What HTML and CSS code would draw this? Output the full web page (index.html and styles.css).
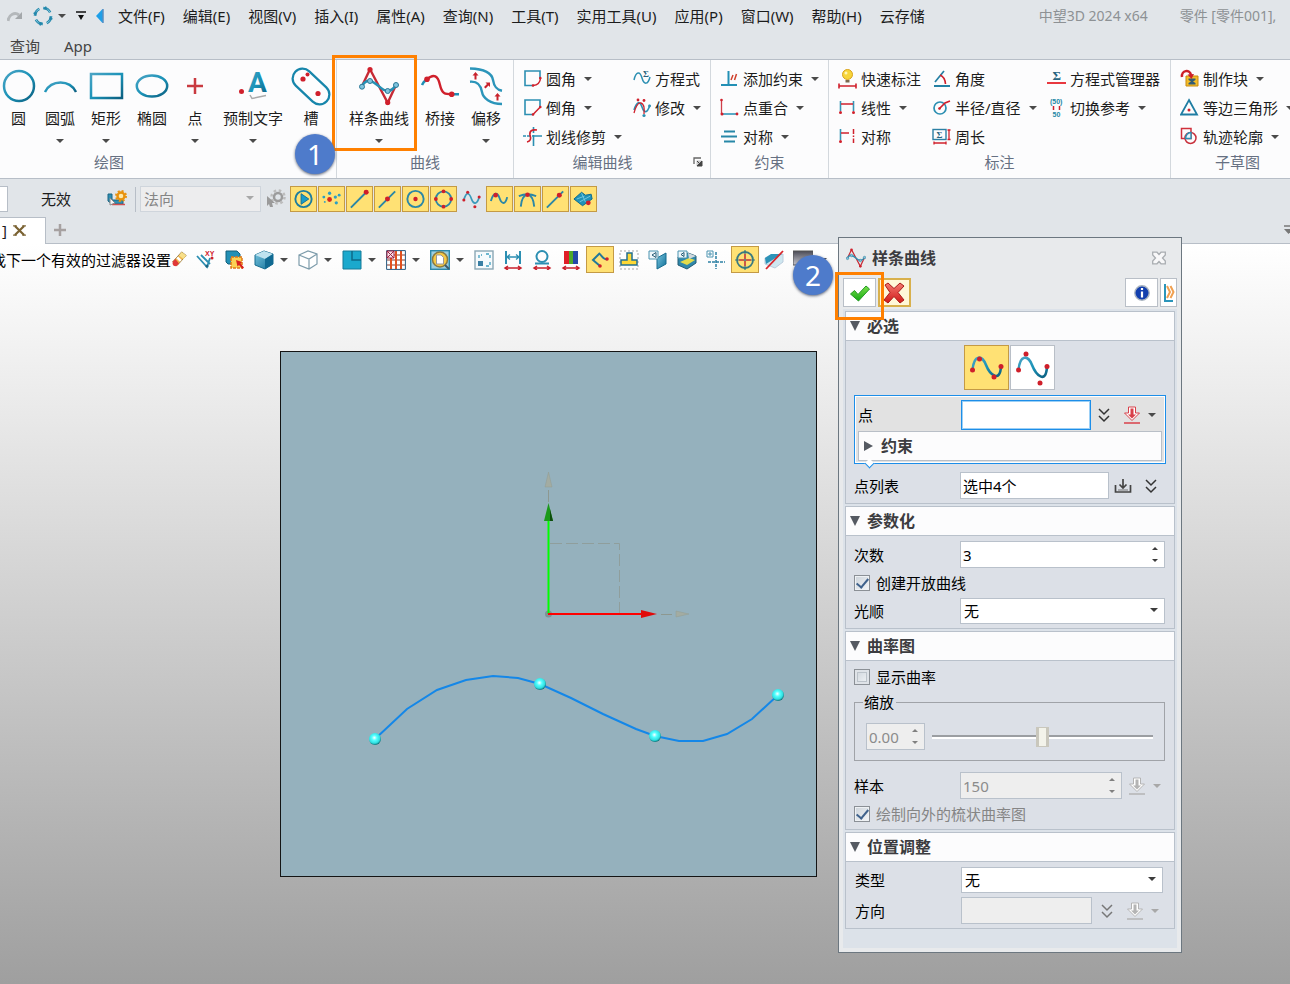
FILE: index.html
```html
<!DOCTYPE html>
<html lang="zh-CN">
<head>
<meta charset="utf-8">
<title>中望3D 2024 x64</title>
<link rel="stylesheet" href="styles.css">
</head>
<body>
<svg class="defs" width="0" height="0" aria-hidden="true">
  <defs>
    <linearGradient id="teal" x1="0" y1="0" x2="1" y2="1"><stop offset="0" stop-color="#4aa3c4"/><stop offset=".5" stop-color="#1b93b8"/><stop offset="1" stop-color="#0c5f80"/></linearGradient>
    <linearGradient id="cube" x1="0" y1="0" x2="1" y2="1"><stop offset="0" stop-color="#7cc7e0"/><stop offset="1" stop-color="#0f6f98"/></linearGradient>
    <radialGradient id="ball" cx=".45" cy=".4" r=".6"><stop offset="0" stop-color="#ffffff"/><stop offset=".35" stop-color="#5ff"/><stop offset=".75" stop-color="#2fdfe0"/><stop offset="1" stop-color="#0b6f75"/></radialGradient>
    <linearGradient id="ok" x1="0" y1="0" x2="0" y2="1"><stop offset="0" stop-color="#7be04a"/><stop offset="1" stop-color="#12a812"/></linearGradient>
    <linearGradient id="no" x1="0" y1="0" x2="0" y2="1"><stop offset="0" stop-color="#f47a70"/><stop offset="1" stop-color="#d01818"/></linearGradient>
    <linearGradient id="screen" x1="0" y1="0" x2="0" y2="1"><stop offset="0" stop-color="#4a4a55"/><stop offset="1" stop-color="#c8c8d0"/></linearGradient>
  </defs>
  <symbol id="spline" viewBox="0 0 40 40"><path d="M11 3.300L28.700 36.700L37 19M2.700 20.700L11 3.300" fill="none" stroke="#c62a35" stroke-width="2.400"/><path d="M2.700 20.700Q6 14 11 15C18 16 22 25 28.700 25Q33 25 37 19" fill="none" stroke="#2590b4" stroke-width="2.600"/><g fill="#d0202c"><circle cx="11" cy="3.500" r="2.600"/><circle cx="28.700" cy="36.500" r="2.600"/></g><g fill="#7fc4de" stroke="#2a7795"><circle cx="3" cy="20.700" r="2.500"/><circle cx="11" cy="15" r="2.500"/><circle cx="28.700" cy="25" r="2.500"/><circle cx="37" cy="19" r="2.500"/></g></symbol>
  <symbol id="chevrons" viewBox="0 0 14 16"><path d="M2 2L7 7L12 2M2 9L7 14L12 9" fill="none" stroke="currentColor" stroke-width="1.500"/></symbol>
  <symbol id="pick" viewBox="0 0 18 20"><path d="M5.500 2H12.500V8H16.500L9 15.500L1.500 8H5.500Z" fill="#fff" stroke="currentColor"/><path d="M7.500 3.500H10.500V9.500H13L9 13.500L5 9.500H7.500Z" fill="currentColor"/><path d="M1 18H17" stroke="currentColor" stroke-width="1.500"/></symbol>
</svg>

<div class="app">
  <header class="menubar">
    <div class="quick">
      <svg class="q-redo" viewBox="0 0 16 14"><path d="M1 12C2 5 8 3 12 6" fill="none" stroke="#b4b8bb" stroke-width="3"/><path d="M15 3V10H8Z" fill="#a4a8ab"/></svg>
      <svg class="q-sync" viewBox="0 0 20 20"><circle cx="10" cy="10" r="8" fill="none" stroke="#2387ab" stroke-width="2.600" stroke-dasharray="8.560 4"/><circle cx="10" cy="10" r="8" fill="none" stroke="#9fd8ea" stroke-width=".8" stroke-dasharray="8.560 4"/><path d="M17 10L20 13L16 14.500ZM10 17L7 20L5.500 16ZM3 10L0 7L4 5.500ZM10 3L13 0L14.500 4Z" fill="#2387ab"/></svg>
      <i class="caret"></i>
      <svg class="q-bar" viewBox="0 0 10 10"><path d="M0 1H10" stroke="#111" stroke-width="1.500"/><path d="M2 4H8L5 9Z" fill="#111"/></svg>
      <svg class="q-left" viewBox="0 0 8 14"><path d="M0 7L6.500 0V14Z" fill="#1e9fe8"/><path d="M7 0V14" stroke="#1565b0"/></svg>
    </div>
    <nav class="menus">
      <a href="#">文件(F)</a><a href="#">编辑(E)</a><a href="#">视图(V)</a><a href="#">插入(I)</a><a href="#">属性(A)</a><a href="#">查询(N)</a><a href="#">工具(T)</a><a href="#">实用工具(U)</a><a href="#">应用(P)</a><a href="#">窗口(W)</a><a href="#">帮助(H)</a><a href="#">云存储</a>
    </nav>
    <div class="doc-title"><span>中望3D 2024 x64</span><span>零件 [零件001],</span></div>
  </header>
  <nav class="ribbon-tabs"><a href="#">查询</a><a href="#">App</a></nav>

  <section class="ribbon">
    <div class="group group-draw">
      <div class="big-row">
        <button class="big w-s"><svg viewBox="0 0 40 40"><circle cx="20" cy="20" r="15" fill="none" stroke="url(#teal)" stroke-width="2.500"/></svg><span>圆</span></button>
        <button class="big"><svg viewBox="0 0 40 40"><path d="M5 26A17.500 17.500 0 0 1 36 26" fill="none" stroke="url(#teal)" stroke-width="2.500"/></svg><span>圆弧</span><i class="caret"></i></button>
        <button class="big"><svg viewBox="0 0 40 40"><rect x="5" y="8" width="31" height="24" fill="none" stroke="url(#teal)" stroke-width="2.500"/></svg><span>矩形</span><i class="caret"></i></button>
        <button class="big"><svg viewBox="0 0 40 40"><ellipse cx="20" cy="20" rx="15.200" ry="10.500" fill="none" stroke="url(#teal)" stroke-width="2.500"/></svg><span>椭圆</span></button>
        <button class="big w-m"><svg viewBox="0 0 40 40"><path d="M12 20H28M20 12V28" stroke="#c93a40" stroke-width="2.500"/></svg><span>点</span><i class="caret"></i></button>
        <button class="big w-l"><svg viewBox="0 0 40 40"><circle cx="8.500" cy="25.500" r="2.500" fill="#d0202c"/><text x="15" y="26" class="glyph-a">A</text><path d="M17 29L19 32.500L33 29.500" fill="none" stroke="#aaa" stroke-width="1.500"/></svg><span>预制文字</span><i class="caret"></i></button>
        <button class="big w-m"><svg viewBox="0 0 40 40"><path d="M11.500 12.500L28.500 28.500" stroke="#1786ab" stroke-width="22" stroke-linecap="round"/><path d="M11.500 12.500L28.500 28.500" stroke="#fdfdfe" stroke-width="17.500" stroke-linecap="round"/><g fill="#d0202c"><circle cx="12" cy="13" r="2.600"/><circle cx="16.500" cy="8.500" r="2"/><circle cx="27" cy="27.500" r="2.600"/></g></svg><span>槽</span></button>
      </div>
      <div class="group-name">绘图</div>
    </div>
    <div class="group group-curve">
      <div class="big-row">
        <button class="big w-l"><svg><use href="#spline"/></svg><span>样条曲线</span><i class="caret"></i></button>
        <button class="big"><svg viewBox="0 0 40 40"><path d="M2 19Q4 15 7 13.300M31 28.300H39" fill="none" stroke="#1f8fb5" stroke-width="2.600"/><path d="M7 13.300C14 7 18 10 20 19S25 28.300 32 28.300" fill="none" stroke="#d0202c" stroke-width="2.400"/><circle cx="7" cy="13.300" r="2.800" fill="#d0202c"/><circle cx="31.700" cy="28.300" r="2.800" fill="#d0202c"/></svg><span>桥接</span></button>
        <button class="big"><svg viewBox="0 0 40 40"><path d="M4 2.500C20 3 26 8 27 14S30 23.500 36 24.700M4 15.700C12 15 15 20 16 26S24 38 36 38" fill="none" stroke="#2b95ba" stroke-width="2.400"/><g fill="#c8222d"><path d="M9.500 6L12.500 9.500H10.500V13.500H8.500V9.500H6.500Z"/><path d="M31.500 27L34.500 30.500H32.500V34.500H30.500V30.500H28.500Z"/><path d="M24 16.500V21L22.500 19.500L19.500 22.500L18 21L21 18L19.500 16.500Z"/></g></svg><span>偏移</span><i class="caret"></i></button>
      </div>
      <div class="group-name">曲线</div>
    </div>
    <div class="group group-edit">
      <div class="cols">
        <div class="col col-a">
          <button class="small"><svg viewBox="0 0 20 20"><path d="M17 10V2H2V16.500H10" fill="none" stroke="#2c8fb2" stroke-width="1.600"/><path d="M10 16.500Q17 16 17.500 9" fill="none" stroke="#d0202c" stroke-width="1.500"/><circle cx="10" cy="16.500" r="1.300" fill="#d0202c"/><circle cx="17.300" cy="9" r="1.300" fill="#d0202c"/></svg>圆角<i class="caret"></i></button>
          <button class="small"><svg viewBox="0 0 20 20"><path d="M17 10V2H2V16.500H10" fill="none" stroke="#2c8fb2" stroke-width="1.600"/><path d="M10 16.500L17.300 9" stroke="#d0202c" stroke-width="1.500"/><circle cx="10" cy="16.500" r="1.300" fill="#d0202c"/><circle cx="17.300" cy="9" r="1.300" fill="#d0202c"/></svg>倒角<i class="caret"></i></button>
          <button class="small"><svg viewBox="0 0 20 20"><path d="M0 9H8" stroke="#2c8fb2" stroke-width="1.500" stroke-dasharray="3 1"/><path d="M9 9H19M10.500 8V19M10.500 0V6" stroke="#2c8fb2" stroke-width="1.600"/><path d="M14 3Q6 2 7 8Q9 14 4 15" fill="none" stroke="#d0202c" stroke-width="1.700"/></svg>划线修剪<i class="caret"></i></button>
        </div>
        <div class="col">
          <button class="small"><svg viewBox="0 0 20 20"><path d="M2 11C4 2 8 2 10 9S16 16 18 8" fill="none" stroke="#2c8fb2" stroke-width="1.500"/><text x="11" y="8" class="glyph-s">Σ</text></svg>方程式</button>
          <button class="small"><svg viewBox="0 0 20 20"><path d="M2 12C5 3 8 3 10 9S15 16 18 7" fill="none" stroke="#2c8fb2" stroke-width="1.600"/><path d="M2 15Q5 4 9 5T12 16" fill="none" stroke="#d0202c" stroke-width="1.300"/><g fill="#d0202c"><circle cx="6" cy="2" r="1.400"/><circle cx="12" cy="2.500" r="1.400"/></g><g fill="#2c8fb2"><circle cx="12" cy="17.500" r="1.600"/><circle cx="17.500" cy="8" r="1.400"/></g></svg>修改<i class="caret"></i></button>
        </div>
      </div>
      <div class="group-name">编辑曲线<button class="launcher" aria-label="编辑曲线选项"><svg viewBox="0 0 10 10"><path d="M1 7V1H8" fill="none" stroke="#666" stroke-width="1.300"/><path d="M3.500 3.500H9V9H3.500Z" fill="#c8c8c8"/><path d="M9 4V9H4ZM4 4L7 7" fill="#444" stroke="#444"/></svg></button></div>
    </div>
    <div class="group group-con">
      <div class="cols">
        <div class="col">
          <button class="small"><svg viewBox="0 0 20 20"><path d="M1 16H17M8.500 2V16" stroke="#2390b5" stroke-width="2"/><path d="M11 11L13 6M14.500 11L16.500 5" stroke="#d0402c" stroke-width="1.500"/></svg>添加约束<i class="caret"></i></button>
          <button class="small"><svg viewBox="0 0 20 20"><path d="M1.500 2V16" stroke="#d0404a" stroke-width="1.300"/><path d="M2 16H17" stroke="#2390b5" stroke-width="1.500"/><g fill="#d0202c"><circle cx="1.500" cy="2" r="1.300"/><circle cx="2" cy="16" r="1.500"/><circle cx="17" cy="16" r="1.400"/></g></svg>点重合<i class="caret"></i></button>
          <button class="small"><svg viewBox="0 0 20 20"><path d="M4 4.500H15M1 9.500H17M4 14.500H15" stroke="#2787a8" stroke-width="2"/></svg>对称<i class="caret"></i></button>
        </div>
      </div>
      <div class="group-name">约束</div>
    </div>
    <div class="group group-dim">
      <div class="cols">
        <div class="col col-b">
          <button class="small"><svg viewBox="0 0 20 20"><circle cx="9.500" cy="5.500" r="5" fill="#f7d53a" stroke="#d9a21c"/><circle cx="8" cy="4" r="1.500" fill="#fff6b8"/><path d="M7.500 11H11.500V13.500H7.500Z" fill="#7a6a50"/><path d="M1 17H18M1 14.500V19.500M18 14.500V19.500" stroke="#d0202c" stroke-width="1.600"/></svg>快速标注</button>
          <button class="small"><svg viewBox="0 0 20 20"><path d="M2.500 3V13M15.500 3V13" stroke="#3794b5" stroke-width="1.600"/><path d="M3 6H15" stroke="#d0202c" stroke-width="1.500"/><circle cx="2.500" cy="14.500" r="1.500" fill="#d0202c"/><circle cx="15.500" cy="14.500" r="1.500" fill="#d0202c"/></svg>线性<i class="caret"></i></button>
          <button class="small"><svg viewBox="0 0 20 20"><path d="M2.500 2V13" stroke="#3794b5" stroke-width="1.600"/><path d="M3 6H11M15.500 2V7M15.500 8.500V10M15.500 11.500V16" stroke="#d0202c" stroke-width="1.500"/><circle cx="2.500" cy="14.500" r="1.500" fill="#d0202c"/></svg>对称</button>
        </div>
        <div class="col col-c">
          <button class="small"><svg viewBox="0 0 20 20"><path d="M2 17H18" stroke="#2480a4" stroke-width="2"/><path d="M3 13L12 2" stroke="#2480a4" stroke-width="1.700"/><path d="M8 6Q13 8 13.500 15" fill="none" stroke="#d0202c" stroke-width="1.600"/></svg>角度</button>
          <button class="small"><svg viewBox="0 0 20 20"><circle cx="8" cy="10" r="6" fill="none" stroke="#2c8fb2" stroke-width="1.700"/><path d="M7 11L13 5L18 3" fill="none" stroke="#d0202c" stroke-width="1.600"/><circle cx="7.500" cy="10.500" r="1.300" fill="#d0202c"/></svg>半径/直径<i class="caret"></i></button>
          <button class="small"><svg viewBox="0 0 20 20"><rect x="1" y="2.500" width="13" height="10" fill="none" stroke="#2c80a4" stroke-width="1.400"/><text x="4.500" y="11" class="glyph-s">Σ</text><path d="M2 16H14M17 3V12.500M15.500 3H18.500M15.500 12.500H18.500M2 14.500V17.500M14 14.500V17.500" stroke="#d0202c" stroke-width="1.300"/></svg>周长</button>
        </div>
        <div class="col">
          <button class="small"><svg viewBox="0 0 20 20"><text x="5.500" y="11" class="glyph-m">Σ</text><path d="M0 14H19" stroke="#e8383f" stroke-width="2"/></svg>方程式管理器</button>
          <button class="small"><svg viewBox="0 0 20 20"><text x="3" y="6" class="glyph-n">(50)</text><text x="5.500" y="19" class="glyph-n">50</text><path d="M6.500 8V12M12.500 8V12" stroke="#d0202c" stroke-width="1.500"/></svg>切换参考<i class="caret"></i></button>
        </div>
      </div>
      <div class="group-name">标注</div>
    </div>
    <div class="group group-sub">
      <div class="cols">
        <div class="col">
          <button class="small"><svg viewBox="0 0 20 20"><path d="M6 7H18V17H6Z" fill="#f4bd28" stroke="#c98a10"/><path d="M8.500 9.500H15.500V11L13 12.500L15.500 14V15.500H8.500V14L11 12.500L8.500 11Z" fill="#345c74"/><path d="M2 8C1 1 10 0 11 6" fill="none" stroke="#cc1f28" stroke-width="2.500"/><path d="M7.500 5.500L14 5L11.500 10Z" fill="#cc1f28"/></svg>制作块<i class="caret"></i></button>
          <button class="small"><svg viewBox="0 0 20 20"><path d="M9 2L17 16.500H1Z" fill="none" stroke="#1f7da3" stroke-width="1.800"/><circle cx="9" cy="12" r="1.500" fill="#d0202c"/></svg>等边三角形<i class="caret"></i></button>
          <button class="small"><svg viewBox="0 0 20 20"><rect x="1.500" y="1.500" width="9.500" height="10" fill="none" stroke="#d0303c" stroke-width="1.500"/><circle cx="10.500" cy="11" r="5.500" fill="none" stroke="#c8303c" stroke-width="1.500"/><path d="M5.500 11.500Q6 6 11 5.500V11.500Z" fill="#e9f5fa" stroke="#2c8fb2" stroke-width="1.400"/></svg>轨迹轮廓<i class="caret"></i></button>
        </div>
      </div>
      <div class="group-name">子草图</div>
    </div>
  </section>

  <div class="toolbar">
    <span class="stub"></span>
    <span class="state">无效</span>
    <svg class="tool-gear" viewBox="0 0 20 20"><path d="M1 5H5V11H16V15H5L1 12Z" fill="#2d8fb4" stroke="#1b6482"/><circle cx="14" cy="7" r="3.500" fill="#ffe9a8" stroke="#e8920e" stroke-width="2.400"/><circle cx="14" cy="7" r="5" fill="none" stroke="#e8920e" stroke-width="2" stroke-dasharray="2 1.930"/><path d="M5 15.500H18" stroke="#d05050" stroke-width="1.500"/><path d="M3 9L8 14L3 16Z" fill="#f4f4f4" stroke="#888"/></svg>
    <span class="rule"></span>
    <span class="pick-wrap pick-normal"><select aria-label="方向" disabled><option>法向</option></select></span>
    <svg class="tool-gear2" viewBox="0 0 20 20"><circle cx="12" cy="8" r="4" fill="none" stroke="#9c9c9c" stroke-width="2.500"/><circle cx="12" cy="8" r="6.500" fill="none" stroke="#bcbcbc" stroke-width="2.500" stroke-dasharray="2.500 2.600"/><path d="M1 7L9 14H6L7 18H4L3 15L1 17Z" fill="#9a9a9a"/></svg>
    <div class="snaps">
      <button class="snap on" aria-label="播放"><svg viewBox="0 0 24 24"><circle cx="12" cy="12" r="8.500" fill="none" stroke="#1d7d9f" stroke-width="2"/><path d="M9.500 6.500L17.500 12L9.500 17.500Z" fill="#1a9cc8" stroke="#0f6f95"/></svg></button>
      <button class="snap on" aria-label="点"><svg viewBox="0 0 24 24"><g fill="#2c9fc4"><circle cx="4" cy="10" r="1.500"/><circle cx="10" cy="6" r="1.700"/><circle cx="16" cy="10" r="1.700"/><circle cx="20" cy="8" r="1.500"/><circle cx="17" cy="16" r="1.700"/><circle cx="5" cy="15" r="1"/></g><circle cx="10" cy="12.500" r="2.500" fill="#d8281e"/></svg></button>
      <button class="snap on" aria-label="端点"><svg viewBox="0 0 24 24"><path d="M3 21L19 5" stroke="#2b87a6" stroke-width="2"/><circle cx="19" cy="5" r="2.600" fill="#cf1f2a"/></svg></button>
      <button class="snap on" aria-label="中点"><svg viewBox="0 0 24 24"><path d="M3 21L20 4" stroke="#2b87a6" stroke-width="2"/><circle cx="12" cy="12" r="2.600" fill="#cf1f2a"/></svg></button>
      <button class="snap on" aria-label="圆心"><svg viewBox="0 0 24 24"><circle cx="12" cy="12" r="8.500" fill="none" stroke="#2b87a6" stroke-width="2"/><circle cx="12" cy="12" r="2.300" fill="#cf1f2a"/></svg></button>
      <button class="snap on" aria-label="象限点"><svg viewBox="0 0 24 24"><circle cx="12" cy="12" r="8" fill="none" stroke="#2b87a6" stroke-width="2"/><g fill="#cf1f2a"><circle cx="12" cy="4" r="2"/><circle cx="12" cy="20" r="2"/><circle cx="4" cy="12" r="2"/><circle cx="20" cy="12" r="2"/></g></svg></button>
      <button class="snap" aria-label="控制点"><svg viewBox="0 0 24 24"><path d="M4 13C7 3 10 6 12 12S18 18 20 10" fill="none" stroke="#3a9aba" stroke-width="1.800"/><g fill="#cf1f2a"><circle cx="4" cy="13" r="1.600"/><circle cx="8" cy="5" r="1.600"/><circle cx="15.500" cy="20" r="1.600"/><circle cx="20" cy="10" r="1.600"/></g></svg></button>
      <button class="snap on" aria-label="曲线点"><svg viewBox="0 0 24 24"><path d="M3 14C6 4 10 5 12 11S18 19 20 10" fill="none" stroke="#2b87a6" stroke-width="2"/><circle cx="8" cy="8" r="2.400" fill="#cf1f2a"/></svg></button>
      <button class="snap on" aria-label="相切"><svg viewBox="0 0 24 24"><path d="M3 9Q12 5 21 9M5 20Q6 8 12 7.500Q18 8 19 20" fill="none" stroke="#2b87a6" stroke-width="2"/><circle cx="12" cy="7.500" r="2.400" fill="#cf1f2a"/></svg></button>
      <button class="snap on" aria-label="最近点"><svg viewBox="0 0 24 24"><path d="M3 21L20 4" stroke="#2b87a6" stroke-width="2"/><circle cx="16" cy="8" r="2.600" fill="#cf1f2a"/></svg></button>
      <button class="snap on" aria-label="曲面点"><svg viewBox="0 0 24 24"><path d="M2 12L10 5L14 8L20 7L21 12L11 19Z" fill="#1f92b8" stroke="#0e6a8c"/><path d="M5 12L13 9M8 15L19 9M10 6L14 15" stroke="#72c8e0"/><circle cx="17" cy="16" r="2.500" fill="#cf1f2a"/></svg></button>
    </div>
  </div>

  <div class="doc-tabs">
    <div class="doc-tab">]<button class="tab-close" aria-label="关闭"><svg viewBox="0 0 14 12"><path d="M2 1L12 11M12 1L2 11" stroke="#7a6232" stroke-width="2.400"/><path d="M0 1H4M10 1H14M0 11H4M10 11H14" stroke="#7a6232" stroke-width="1.500"/></svg></button></div>
    <button class="tab-add" aria-label="新建"><svg viewBox="0 0 14 14"><path d="M7 1V13M1 7H13" stroke="#a6a1a1" stroke-width="2.500"/></svg></button>
    <svg class="tab-more" viewBox="0 0 10 10"><path d="M1 1H10" stroke="#777" stroke-width="1.500"/><path d="M1 4H10L5.500 9Z" fill="#777"/></svg>
  </div>

  <main class="viewport">
    <svg class="canvas" aria-label="草图">
      <g transform="translate(0 -244)">
        <rect x="280.500" y="351.500" width="536" height="525" fill="#95b1bd" stroke="#141414"/>
        <path d="M550 543.500H619.500V614" fill="none" stroke="#8f9e9c" stroke-dasharray="12 4"/>
        <path d="M548.500 490V502M661 614.500H672" stroke="#8d9890"/>
        <path d="M548.500 472L552 487H545ZM689 614L676 611V617Z" fill="#a3aca2" stroke="#929c92" stroke-width=".5"/>
        <circle cx="548.500" cy="614" r="3.500" fill="#7f9096"/>
        <path d="M548.500 614V520" stroke="#0f0" stroke-width="2"/>
        <path d="M548 614H643" stroke="#f00" stroke-width="2"/>
        <path d="M548.500 503L553 521H544Z" fill="#1a9a1a"/>
        <path d="M550 509L553 521H550Z" fill="#0c4d0c"/>
        <path d="M657 614L641 610V618Z" fill="#e00a0a"/>
        <polyline points="375,739 407,709 437,690 466,680 493,676 518,678 540,684 571,698 603,714 636,729 655,736 679,741 703,741 727,734 752,719 778,695" fill="none" stroke="#1487e8" stroke-width="2"/>
        <g fill="url(#ball)"><circle cx="375" cy="739" r="6"/><circle cx="540" cy="684" r="6"/><circle cx="655" cy="736" r="6"/><circle cx="778" cy="695" r="6"/></g>
      </g>
    </svg>
    <div class="view-bar">
      <span class="hint">找下一个有效的过滤器设置</span>
      <button class="vb vb-eraser" aria-label="擦除"><svg viewBox="0 0 20 20"><path d="M3 12L13 1L18 5L8 16Z" fill="#f0b64c" stroke="#9a7a40"/><path d="M13 1L18 5L15 9L10 5Z" fill="#f8e08a"/><path d="M7 8L9 6L13 10L11 12Z" fill="#fff"/><path d="M3 12L6 9L10 14L7 17Q2 17 3 12Z" fill="#e03838"/></svg></button>
      <button class="vb" aria-label="XY"><svg viewBox="0 0 20 20"><path d="M1 6L11 17L14 8M5 5L14 14" fill="none" stroke="#2c8fb2" stroke-width="1.800"/><text x="9" y="6" class="glyph-xy">XY</text><circle cx="11" cy="16" r="1.600" fill="#1b6482"/><circle cx="16" cy="8" r="1.500" fill="#d0202c"/></svg></button>
      <button class="vb" aria-label="选择"><svg viewBox="0 0 20 20"><path d="M1 1H12L15 4V14H3L1 12Z" fill="#2390b5" stroke="#14607c"/><rect x="6" y="7" width="11" height="11" fill="#fbd155" stroke="#e07818" stroke-width="1.500" stroke-dasharray="3 1"/><path d="M11 10L17 12L15.500 13.500L19 17.500L17.500 19L14 15L12.500 16.500Z" fill="#d8201e"/></svg></button>
      <button class="vb drop" aria-label="着色"><svg viewBox="0 0 20 20"><path d="M1 5L10 1L19 4V14L11 19L1 15Z" fill="url(#cube)" stroke="#176d90"/><path d="M1 5L11 9L19 4L10 1Z" fill="#bfe3ef"/><path d="M11 9V19L19 14V4Z" fill="#116a92"/></svg><i class="caret"></i></button>
      <button class="vb drop" aria-label="线框"><svg viewBox="0 0 20 20"><path d="M1 5L10 1L19 4V14L11 19L1 15ZM1 5L11 9L19 4M11 9V19" fill="#fff" stroke="#7d9cab" stroke-width="1.200"/></svg><i class="caret"></i></button>
      <button class="vb drop" aria-label="视图"><svg viewBox="0 0 20 20"><path d="M1 1H19V19H1Z" fill="#1ba9cd" stroke="#157a98"/><path d="M10 1V10H19" fill="none" stroke="#0e6a88" stroke-width="1.500"/></svg><i class="caret"></i></button>
      <button class="vb drop" aria-label="栅格"><svg viewBox="0 0 20 20"><path d="M0 0H20V20H0Z" fill="#fff"/><path d="M1 5H20M1 10H20M1 15H20" stroke="#8a3a2a" stroke-width="1.200" stroke-dasharray="3 2"/><path d="M5 5V19M10 1V19M15 1V19" stroke="#e2511f" stroke-width="2"/><path d="M.6.6H19.400V19.400H.6Z" fill="none" stroke="#285a80"/><path d="M1 1H8V8H1ZM1 1L8 8M8 1L1 8" fill="#f4dfe8" stroke="#a02040"/></svg><i class="caret"></i></button>
      <button class="vb drop" aria-label="缩放"><svg viewBox="0 0 20 20"><rect x=".7" y=".7" width="18.600" height="18.600" fill="#9bcfe2" stroke="#2c87a8" stroke-width="1.400"/><circle cx="10" cy="9.500" r="7.500" fill="#f6c945" stroke="#8a7a40" stroke-width="1.500"/><path d="M6.500 5H11L13.500 7.500V14H6.500Z" fill="#fff" stroke="#999"/><path d="M15 15L19 19" stroke="#405a68" stroke-width="2"/></svg><i class="caret"></i></button>
      <button class="vb" aria-label="适应"><svg viewBox="0 0 20 20"><rect x="1" y="1" width="18" height="18" fill="#f6fafc" stroke="#8ba7b5" stroke-width="1.400"/><path d="M5 8V5H8M12 4H16V8M16 12V16H12" fill="none" stroke="#3fa0c0" stroke-width="1.300" stroke-dasharray="3 2"/><path d="M4 11H9V16H4Z" fill="#3a7fa4"/></svg></button>
      <button class="vb" aria-label="线性标注"><svg viewBox="0 0 20 20"><path d="M3 1V14M17 1V14" stroke="#2c8fb2" stroke-width="2"/><path d="M4 7H16M7 4.500L4 7L7 9.500M13 4.500L16 7L13 9.500" fill="none" stroke="#2c8fb2" stroke-width="1.300"/><path d="M3 18H17M5 16L2 18L5 20M15 16L18 18L15 20" fill="none" stroke="#c8202c" stroke-width="1.500"/></svg></button>
      <button class="vb" aria-label="圆标注"><svg viewBox="0 0 20 20"><circle cx="10" cy="6.500" r="5.500" fill="none" stroke="#2c8fb2" stroke-width="2"/><path d="M3 13.500H17" stroke="#2c8fb2" stroke-width="2"/><path d="M3 18H17M5 16L2 18L5 20M15 16L18 18L15 20" fill="none" stroke="#c8202c" stroke-width="1.500"/></svg></button>
      <button class="vb" aria-label="颜色"><svg viewBox="0 0 20 20"><path d="M3 1H8V14H3Z" fill="#e01f28"/><path d="M8 1H12V14H8Z" fill="#4ea82c"/><path d="M12 1H17V14H12Z" fill="#2448a8"/><path d="M3 18H17M5 16L2 18L5 20M15 16L18 18L15 20" fill="none" stroke="#c8202c" stroke-width="1.500"/></svg></button>
      <button class="vb on" aria-label="折线"><svg viewBox="0 0 20 20"><path d="M10 3L3 10L10 16M10 4Q14 10 17 9" fill="none" stroke="#23789a" stroke-width="2"/><circle cx="17" cy="9" r="1.800" fill="#d0202c"/><circle cx="10" cy="16" r="1.800" fill="#d0202c"/></svg></button>
      <button class="vb" aria-label="投影"><svg viewBox="0 0 20 20"><rect x="1" y="1" width="18" height="18" fill="none" stroke="#a5a5a5" stroke-dasharray="2 2"/><path d="M8 3H13V10H18V15H2V10H8Z" fill="#fdd835" stroke="#236f90" stroke-width="1.500"/></svg></button>
      <button class="vb" aria-label="剖面"><svg viewBox="0 0 20 20"><path d="M9 8L18 3V14L9 19Z" fill="url(#cube)" stroke="#176d90"/><path d="M1 1H10V9H1Z" fill="#eef6fa" stroke="#4b93b0"/><path d="M8 2.500L4 5L8 7.500Z" fill="none" stroke="#235a74"/></svg></button>
      <button class="vb" aria-label="剖切"><svg viewBox="0 0 20 20"><path d="M1 7L11 3L19 6V13L10 19L1 15Z" fill="#2f88ab" stroke="#255c74"/><path d="M3 12L12 8L18 10L10 15Z" fill="#e3dc4a"/><path d="M11 3L19 6L12 9Z" fill="#cfd8dc"/><path d="M1 1H10V8H1Z" fill="#eef6fa" stroke="#4b93b0"/><path d="M7 2.500L4 4.500L7 6.500Z" fill="none" stroke="#235a74"/></svg></button>
      <button class="vb" aria-label="坐标"><svg viewBox="0 0 20 20"><path d="M10 2V19M2 12H19" stroke="#2c80a4" stroke-width="1.500" stroke-dasharray="3 1"/><path d="M1 1H7V7H1ZM3 3H5V5H3Z" fill="#fff" stroke="#4b93b0"/></svg></button>
      <button class="vb on" aria-label="目标"><svg viewBox="0 0 20 20"><circle cx="10" cy="10" r="8" fill="none" stroke="#3a7a80" stroke-width="1.800"/><path d="M10 0V20M0 10H20" stroke="#3a7a80" stroke-width="1.200"/><path d="M10 4V9M10 11V16M4 10H9M11 10H16" stroke="#e0453a" stroke-width="1.600"/></svg></button>
      <button class="vb" aria-label="隐藏面"><svg viewBox="0 0 20 20"><path d="M1 8L7 5L19 4V12L11 18L1 14Z" fill="#cfe7f0" stroke="#bcd"/><path d="M1 8L7 4L18 4L2 14Z" fill="#2d93b8"/><path d="M2 19L19 1" stroke="#d8262c" stroke-width="1.800"/></svg></button>
      <button class="vb drop" aria-label="显示"><svg viewBox="0 0 20 20"><rect x="0" y="1" width="20" height="14" fill="url(#screen)" stroke="#555"/></svg><i class="caret"></i></button>
    </div>
  </main>

  <form class="dialog" aria-label="样条曲线">
    <div class="dialog-title"><svg><use href="#spline"/></svg><h1>样条曲线</h1><button type="button" class="dialog-close" aria-label="关闭"><svg viewBox="0 0 14 14"><path d="M.7 1.200H5L7 3.500L9 1.200H13.300V4L10.500 7L13.300 10V12.800H9L7 10.500L5 12.800H.7V10L3.500 7L.7 4Z" fill="#f8f8f9" stroke="#a9adb1" stroke-width="1.300"/></svg></button></div>
    <div class="dialog-actions">
      <button type="button" class="act" aria-label="确定"><svg viewBox="0 0 22 22"><path d="M1.500 12L5.500 8.500L9 12.500L17 4L20.500 7L9.500 19Z" fill="url(#ok)" stroke="#249a24"/></svg></button>
      <button type="button" class="act act-no" aria-label="取消"><svg viewBox="0 0 22 22"><path d="M1 3L4 1L10 6.500L16 1L20 4L14 10.500L20 18L16 21L10 14.500L4 21L0 18L6 10.500Z" fill="url(#no)" stroke="#a81a1a"/></svg></button>
      <span class="grow"></span>
      <button type="button" class="act" aria-label="信息"><svg viewBox="0 0 22 22"><circle cx="11" cy="11" r="7.200" fill="#123fae" stroke="#a9b3bf" stroke-width="1.400"/><path d="M11 9.500V15.500M11 6V8" stroke="#fff" stroke-width="2.200"/></svg></button>
      <button type="button" class="act act-slim" aria-label="展开"><svg viewBox="0 0 12 22"><path d="M2 2V19H10" fill="none" stroke="#2b95ba" stroke-width="2"/><path d="M4 4L7 10L4 16M7.500 4L10.500 10L7.500 16" fill="none" stroke="#f0a050" stroke-width="2"/></svg></button>
    </div>
    <div class="dialog-body">
      <section class="sec">
        <button type="button" class="sec-head"><i class="tri"></i>必选</button>
        <div class="sec-body">
          <div class="modes">
            <button type="button" class="mode on" aria-label="通过点"><svg viewBox="0 0 36 36"><path d="M3.500 20C5 4 13 5 17 15S31 33 32 16.500" fill="none" stroke="url(#teal)" stroke-width="2.600"/><g fill="#cf1f2a"><circle cx="3.500" cy="20" r="2.500"/><circle cx="10.500" cy="9" r="2.500"/><circle cx="25" cy="27" r="2.500"/><circle cx="32" cy="16.500" r="2.500"/></g></svg></button>
            <button type="button" class="mode" aria-label="控制点"><svg viewBox="0 0 36 36"><path d="M3.500 20C5 4 13 5 17 15S31 35 32 16.500" fill="none" stroke="url(#teal)" stroke-width="2.600"/><g fill="#cf1f2a"><circle cx="3.500" cy="20" r="2.500"/><circle cx="11" cy="4" r="2.500"/><circle cx="25" cy="33" r="2.500"/><circle cx="32" cy="16.500" r="2.500"/></g></svg></button>
          </div>
          <div class="focus-box">
            <div class="field">
              <label for="pt">点</label>
              <input id="pt" class="box box-focus" type="text">
              <button type="button" class="ico" aria-label="更多"><svg class="chev"><use href="#chevrons"/></svg></button>
              <button type="button" class="ico ico-pick" aria-label="拾取"><svg class="pick-red"><use href="#pick"/></svg><i class="caret"></i></button>
            </div>
            <button type="button" class="sub-head"><i class="tri tri-right"></i>约束</button>
          </div>
          <div class="field field-list">
            <label for="list">点列表</label>
            <input id="list" class="box" type="text" value="选中4个">
            <button type="button" class="ico" aria-label="导入"><svg class="load" viewBox="0 0 18 16"><path d="M1.500 7V14H16.500V7M9 1V10M5.500 6.500L9 10L12.500 6.500" fill="none" stroke="#444" stroke-width="1.700"/><path d="M4 12H14" stroke="#777"/></svg></button>
            <button type="button" class="ico" aria-label="更多"><svg class="chev"><use href="#chevrons"/></svg></button>
          </div>
        </div>
      </section>

      <section class="sec">
        <button type="button" class="sec-head"><i class="tri"></i>参数化</button>
        <div class="sec-body pad-5">
          <div class="field"><label for="deg">次数</label><span class="spin"><input id="deg" class="box" type="number" value="3"></span></div>
          <label class="check"><input type="checkbox" checked>创建开放曲线</label>
          <div class="field"><label for="fair">光顺</label><span class="pick-wrap"><select id="fair"><option>无</option></select></span></div>
        </div>
      </section>

      <section class="sec">
        <button type="button" class="sec-head"><i class="tri"></i>曲率图</button>
        <div class="sec-body pad-1">
          <label class="check"><input type="checkbox" class="inset">显示曲率</label>
          <fieldset>
            <legend>缩放</legend>
            <div class="scale"><span class="spin spin-s off"><input class="box" type="number" value="0.00" aria-label="缩放值" disabled></span><input class="slider" type="range" aria-label="缩放" value="50" disabled></div>
          </fieldset>
          <div class="field"><label for="smp">样本</label><span class="spin off"><input id="smp" class="box" type="number" value="150" disabled></span><button type="button" class="ico ico-pick off-pick" aria-label="拾取" disabled><svg class="pick-red"><use href="#pick"/></svg><i class="caret"></i></button></div>
          <label class="check dim"><input type="checkbox" checked disabled>绘制向外的梳状曲率图</label>
        </div>
      </section>

      <section class="sec">
        <button type="button" class="sec-head"><i class="tri"></i>位置调整</button>
        <div class="sec-body pad-place">
          <div class="field"><label for="type">类型</label><span class="pick-wrap"><select id="type"><option>无</option></select></span></div>
          <div class="field"><label for="dir">方向</label><input id="dir" class="box" type="text" disabled>
            <button type="button" class="ico" aria-label="更多" disabled><svg class="chev"><use href="#chevrons"/></svg></button>
            <button type="button" class="ico ico-pick off-pick" aria-label="拾取" disabled><svg class="pick-red"><use href="#pick"/></svg><i class="caret"></i></button>
          </div>
        </div>
      </section>
    </div>
  </form>

  <span class="frame frame-1"></span>
  <span class="frame frame-2"></span>
  <span class="badge badge-1">1</span>
  <span class="badge badge-2">2</span>
</div>
</body>
</html>
```
FILE: styles.css
```css
* { box-sizing: border-box; }
body {
  margin: 0;
  font: 15px/20px "Noto Sans", "Noto Sans CJK SC", sans-serif;
  color: #1c1c1c;
  background: #e1e5e9;
}
button, input, select { font: inherit; color: inherit; margin: 0; }
button { background: none; border: 0; padding: 0; white-space: nowrap; }
a { color: inherit; text-decoration: none; }
svg { display: block; flex: none; }
.defs { position: absolute; }
.caret {
  flex: none;
  border: 4px solid transparent;
  border-top-color: #4a4a4a;
  border-bottom: 0;
}
.grow { flex: 1; }

.app {
  position: relative;
  display: flex;
  flex-direction: column;
  min-height: 100vh;
  overflow: hidden;
}

/* menu bar and ribbon tabs */
.menubar { display: flex; align-items: center; height: 33px; padding-bottom: 2px; white-space: nowrap; }
.quick { display: flex; align-items: center; gap: 10px; width: 118px; padding-left: 7px; flex: none; }
.q-redo { width: 16px; height: 14px; }
.q-sync { width: 20px; height: 20px; }
.quick .caret { margin-left: -5px; }
.q-bar { width: 10px; height: 10px; }
.q-left { width: 8px; height: 14px; }
.menus { display: flex; gap: 18px; }
.doc-title { display: flex; gap: 32px; margin-left: 114px; font-size: 14px; color: #8d9194; }
.ribbon-tabs { display: flex; gap: 24px; height: 26px; padding: 3px 10px 0; color: #444; }

/* ribbon */
.ribbon {
  display: flex;
  height: 120px;
  border: solid #b7bec7;
  border-width: 1px 0;
  background: #fcfcfd;
}
.group {
  display: flex;
  flex-direction: column;
  justify-content: space-between;
  flex: none;
  padding: 4px 0 6px;
  border-right: 1px solid #d3d8dd;
}
.group-draw { width: 337px; }
.group-curve { width: 177px; padding-left: 4px; }
.group-edit { width: 197px; padding-left: 9px; }
.group-con { width: 118px; padding-left: 9px; }
.group-dim { width: 342px; padding-left: 9px; }
.group-sub { width: 134px; padding-left: 9px; }
.group-name { position: relative; text-align: center; color: #667082; }
.group-draw .group-name { padding-right: 118px; }
.group-curve .group-name { padding-right: 4px; }
.group-edit .group-name { padding-right: 28px; }
.group-con .group-name, .group-dim .group-name, .group-sub .group-name { padding-right: 9px; }
.launcher { position: absolute; right: 7px; top: 5px; }
.launcher svg { width: 10px; height: 10px; }
.big-row { display: flex; }
.big { display: flex; flex-direction: column; align-items: center; width: 46px; padding-top: 2px; }
.big svg { width: 40px; height: 40px; }
.big span { margin-top: 2px; }
.big .caret { margin-top: 11px; }
.big.w-s { width: 37px; }
.big.w-m { width: 40px; }
.big.w-l { width: 76px; }
.cols { display: flex; }
.col { display: flex; flex-direction: column; align-items: flex-start; }
.col-a { width: 109px; }
.col-b { width: 94px; }
.col-c { width: 115px; }
.small { display: flex; align-items: center; height: 29px; }
.small svg { width: 20px; height: 20px; margin-right: 3px; }
.small .caret { margin-left: 8px; }
.glyph-a { font: bold 28px Roboto, sans-serif; fill: url(#teal); }
.glyph-s { font: bold 9px "Liberation Serif", serif; fill: #2a6480; }
.glyph-m { font: bold 13px "Liberation Serif", serif; fill: #2a6480; }
.glyph-n { font: bold 7px "Liberation Sans", sans-serif; fill: #2387a5; }
.glyph-xy { font: bold 7px "Liberation Sans", sans-serif; fill: #d0202c; }

/* snap toolbar */
.toolbar { display: flex; align-items: center; height: 38px; padding-top: 2px; }
.stub { width: 8px; height: 26px; border: 1px solid #b7bec7; border-left: 0; background: #fff; }
.state { margin-left: 33px; }
.tool-gear { width: 20px; height: 20px; margin-left: 36px; }
.rule { width: 1px; height: 25px; margin: 0 4px 0 8px; background: #b7bec7; }
.pick-normal { width: 121px; }
.tool-gear2 { width: 20px; height: 20px; margin: 0 4px 0 5px; }
.snaps { display: flex; gap: 1px; }
.snap { width: 27px; height: 26px; padding: 0 1px; border: 1px solid transparent; }
.snap svg { width: 23px; height: 24px; }
.on { background: #ffe174; border: 1px solid #c49a45; }

/* document tabs */
.doc-tabs { display: flex; align-items: center; height: 27px; border-bottom: 1px solid #b7bec7; }
.doc-tab {
  display: flex;
  align-items: center;
  gap: 6px;
  width: 46px;
  height: 27px;
  margin-bottom: -1px;
  padding: 0 0 2px 2px;
  border: solid #b7bec7;
  border-width: 1px 1px 0 0;
  background: #fff;
}
.tab-close svg { width: 13px; height: 11px; }
.tab-add { margin-left: 7px; }
.tab-add svg { width: 14px; height: 14px; }
.tab-more { width: 10px; height: 10px; margin: 0 -3px 0 auto; }

/* drawing area */
.viewport {
  position: relative;
  flex: 1;
  min-height: 740px;
  background: linear-gradient(#fff, #9f9f9f);
}
.canvas { position: absolute; inset: 0; width: 100%; height: 100%; }
.view-bar { position: relative; display: flex; align-items: center; gap: 1px; height: 31px; white-space: nowrap; }
.hint { margin-left: -9px; width: 181px; color: #000; }
.vb { display: flex; align-items: center; justify-content: center; width: 28px; height: 27px; flex: none; }
.vb svg { width: 20px; height: 20px; }
.vb-eraser { width: 16px; margin: 0 4px 0 -2px; }
.vb-eraser svg { width: 18px; height: 18px; }
.drop { width: 43px; justify-content: flex-start; padding-left: 4px; }
.drop .caret { margin-left: 6px; }

/* dialog */
.dialog {
  position: absolute;
  left: 838px;
  top: 237px;
  width: 344px;
  padding: 0 4px 4px;
  border: 1px solid #6c7780;
  background: #e8eaec;
}
.dialog-title { display: flex; align-items: center; height: 40px; padding: 0 11px 0 3px; }
.dialog-title svg { width: 20px; height: 20px; }
.dialog-title h1 { flex: 1; margin: 0 0 0 6px; font-size: 16px; line-height: 20px; font-weight: 600; color: #3c3c40; }
.dialog-title .dialog-close svg { width: 14px; height: 14px; }
.dialog-actions { display: flex; gap: 2px; height: 31px; }
.act {
  display: flex;
  align-items: center;
  justify-content: center;
  width: 33px;
  height: 29px;
  border: 1px solid #b9bfc7;
  background: #fff;
}
.act svg { width: 22px; height: 22px; }
.act-no { border: 2px solid #d8b04c; background: #fff7d8; }
.act-slim { width: 17px; }
.act-slim svg { width: 12px; }
.dialog-body {
  display: flex;
  flex-direction: column;
  gap: 2px;
  padding: 2px 2px 19px;
  background: #dce2e9;
}
.sec { border: 1px solid #b9c1cb; background: #dce0e7; }
.sec-head, .sub-head {
  display: flex;
  align-items: center;
  gap: 7px;
  width: 100%;
  height: 29px;
  padding-left: 4px;
  border-bottom: 1px solid #b9c1cb;
  background: #fcfcfd;
  font-size: 16px;
  font-weight: 600;
  color: #3c3c40;
}
.tri { border: 5px solid transparent; border-top: 10px solid #555a62; border-bottom: 0; }
.tri-right { border: 5px solid transparent; border-left: 9px solid #555a62; border-right: 0; }
.sec-body { padding: 4px 9px 4px 8px; }
.pad-5 { padding-top: 5px; }
.pad-1 { padding-top: 1px; padding-bottom: 0; }
.modes { display: flex; justify-content: center; gap: 1px; }
.mode { display: flex; align-items: center; justify-content: center; width: 45px; height: 45px; border: 1px solid #b9bfc7; background: #fff; }
.mode.on { border-color: #c49a45; background: #ffe174; }
.mode svg { width: 36px; height: 36px; }
.focus-box {
  position: relative;
  display: flex;
  flex-direction: column;
  gap: 1px;
  margin: 5px -1px 8px 0;
  padding: 4px 3px 2px;
  border: 1px solid #1d8ee8;
  background: #e2e2e2;
  box-shadow: inset 0 0 0 1px #fff;
}
.focus-box::after {
  content: "";
  position: absolute;
  left: 11px;
  bottom: -4px;
  width: 6px;
  height: 6px;
  border: solid #1d8ee8;
  border-width: 0 1px 1px 0;
  background: #fff;
  transform: rotate(45deg);
}
.sub-head { gap: 8px; height: 30px; padding-left: 5px; border: 1px solid #b9bfc7; }
.field { display: flex; align-items: center; }
.field > label { width: 106px; flex: none; color: #000; }
.focus-box .field > label { width: 103px; }
.box {
  width: 100%;
  height: 27px;
  min-width: 0;
  padding: 0 2px;
  border: 1px solid #b9c1cb;
  border-radius: 0;
  outline: 0;
  background: #fff;
  color: #000;
  appearance: none;
}
.box:disabled { background: #eee; color: #8b8b8b; }
.box-focus { flex: 0 0 130px; height: 30px; border: 1px solid #1d8ee8; box-shadow: inset 0 0 0 1px #9cd0f6; }
.field-list .box { flex: 0 0 149px; }
.ico { display: flex; align-items: center; gap: 7px; margin-left: 6px; color: #333; }
.field-list .ico { margin-left: 5px; }
.field-list .ico + .ico { margin-left: 12px; }
.ico:disabled { color: #777; }
.chev { width: 14px; height: 16px; }
.load { width: 18px; height: 16px; }
.pick-red { width: 18px; height: 20px; }
.ico-pick { color: #d8404a; margin-left: 12px; }
.off-pick:disabled { color: #b4b4b4; }
.off-pick .caret { border-top-color: #a8a8a8; }
.spin { position: relative; flex: 1; display: flex; }
.spin input::-webkit-inner-spin-button { display: none; }
.spin::before, .spin::after {
  content: "";
  position: absolute;
  right: 7px;
  border: 3px solid transparent;
}
.spin::before { top: 6px; border-bottom-color: #3c3c3c; border-top: 0; }
.spin::after { bottom: 6px; border-top-color: #3c3c3c; border-bottom: 0; }
.spin.off::before { border-bottom-color: #808080; }
.spin.off::after { border-top-color: #808080; }
.spin-s { flex: 0 0 59px; }
.spin + .off-pick { margin-left: 6px; padding-right: 4px; }
.pick-wrap { position: relative; flex: 1; display: flex; }
.pick-wrap.pick-normal { flex: none; }
.pick-wrap::after {
  content: "";
  position: absolute;
  right: 7px;
  top: 10px;
  border: 4px solid transparent;
  border-top-color: #3c3c3c;
  border-bottom: 0;
}
.pick-normal::after { border-top-color: #a8a8a8; }
select {
  width: 100%;
  height: 26px;
  padding: 0 3px;
  border: 1px solid #b9c1cb;
  border-radius: 0;
  background: #fff;
  color: #000;
  appearance: none;
}
select:disabled { background: #ededee; color: #858585; opacity: 1; border-color: #cfd5dc; }
.check { display: flex; align-items: center; gap: 6px; height: 30px; color: #000; }
.check.dim { color: #858585; }
.check input {
  display: grid;
  place-items: center;
  width: 16px;
  height: 16px;
  border: 1px solid #8b9096;
  background: linear-gradient(135deg, #ccd3da, #f4f6f8);
  box-shadow: inset 0 0 0 1px #eef1f4;
  appearance: none;
}
.check input:checked::after {
  content: "";
  width: 5px;
  height: 10px;
  margin-bottom: 3px;
  border: solid #3f628c;
  border-width: 0 2px 2px 0;
  transform: rotate(40deg);
}
.check .inset { box-shadow: inset 0 0 0 2px #dfe3e8, inset 0 0 0 3px #bcc3ca; }
fieldset { margin: 0 0 11px; padding: 11px 11px 10px; border: 1px solid #a0a3a8; min-width: 0; }
legend { margin-left: -3px; padding: 0 2px 0 1px; color: #000; }
.scale { display: flex; align-items: center; gap: 7px; }
.slider { flex: 1; min-width: 0; height: 22px; appearance: none; background: none; }
.slider::-webkit-slider-runnable-track {
  height: 4px;
  border-top: 2px solid #9b9ea2;
  border-bottom: 2px solid #fff;
}
.slider::-webkit-slider-thumb {
  width: 13px;
  height: 20px;
  margin-top: -10px;
  border: solid #c9c7bc;
  border-width: 1px 3px;
  background: #f3f3ea;
  appearance: none;
}
.pad-place { display: grid; gap: 4px; padding: 5px 11px 4px 9px; }
.pad-place .box { flex: 0 0 131px; }
.pad-place .ico { margin-left: 8px; }
.pad-place .ico + .ico { margin-left: 12px; }

/* step annotations */
.frame { position: absolute; border: 3px solid #ff8000; }
.frame-1 { left: 332px; top: 55px; width: 85px; height: 96px; }
.frame-2 { left: 835px; top: 272px; width: 49px; height: 48px; }
.badge {
  position: absolute;
  width: 40px;
  height: 40px;
  border-radius: 50%;
  background: #4e7bcb;
  box-shadow: 0 1px 3px #5b6478;
  color: #fff;
  font-size: 28px;
  line-height: 40px;
  text-align: center;
}
.badge-1 { left: 295px; top: 134px; }
.badge-2 { left: 793px; top: 255px; }
```
